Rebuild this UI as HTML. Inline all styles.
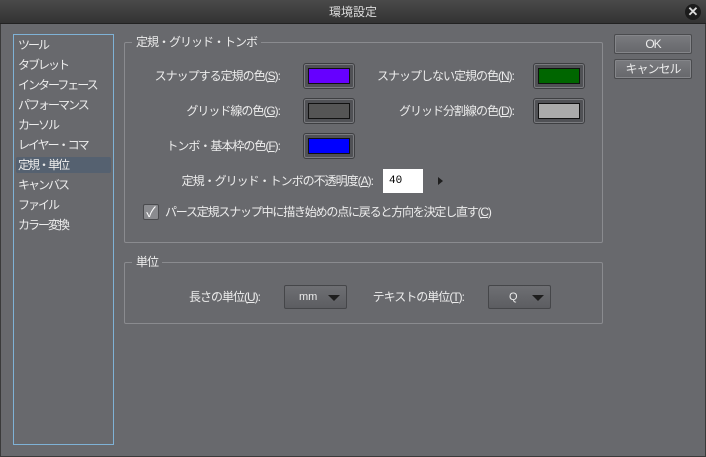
<!DOCTYPE html>
<html><head><meta charset="utf-8"><style>
*{box-sizing:border-box;margin:0;padding:0}
body{width:706px;height:457px;background:#68696d;font-family:"Liberation Sans","Noto Sans CJK JP",sans-serif;font-size:12px;color:#ececec;position:relative;overflow:hidden}
.abs{position:absolute}
#title{left:0;top:0;width:706px;height:24px;background:linear-gradient(#4a4a4a,#333);border-bottom:1px solid #222;text-align:center;line-height:24px;color:#ddd;font-size:12px}
#win{left:0;top:24px;width:706px;height:433px;border:1px solid #3a3a3a;border-top:none}
#side{left:13px;top:34px;width:101px;height:411px;border:1px solid #7fb2d6;background:#68696d}
.it{position:absolute;left:4px;height:16px;line-height:16px;white-space:nowrap;letter-spacing:-2px}
.sel{left:2px;width:95px;background:#556170;border-radius:2px;padding-left:2px}
.grp{border:1px solid #8a8b8f;border-radius:2px}
.gt{background:#68696d;padding:0 4px;line-height:14px;letter-spacing:-1px}
.lab{text-align:right;line-height:14px;white-space:nowrap;letter-spacing:-1px}
.sw{width:52px;height:26px;background:#505155;border:1px solid #3e3f42;border-radius:3px;padding:4px;box-shadow:inset 0 0 0 1px #7a7b7f}
.sw div{width:100%;height:100%;border:1px solid #111}
.btn{width:78px;height:20px;border:1px solid #4a4b4e;border-radius:2px;background:linear-gradient(#7a7b7f,#66676b);text-align:center;line-height:18px;box-shadow:inset 0 0 0 1px #85868a;letter-spacing:-1px}
.dd{width:63px;height:24px;border:1px solid #454649;border-radius:2px;background:linear-gradient(#6e6f73,#5c5d61);line-height:22px;font-size:11px}
.tri{position:absolute;right:6px;top:9px;width:0;height:0;border-left:6px solid transparent;border-right:6px solid transparent;border-top:6px solid #1e1e1e}
u{text-decoration:underline}
</style></head><body>
<div id="title" class="abs">環境設定</div>
<div class="abs" style="left:685px;top:4px;width:16px;height:16px;border-radius:50%;background:#1c1c1c;color:#ddd;font-size:13px;line-height:16px;text-align:center;font-weight:bold">✕</div>
<div id="win" class="abs"></div>
<div id="side" class="abs">
<div class="it" style="top:2px">ツール</div>
<div class="it" style="top:22px">タブレット</div>
<div class="it" style="top:42px">インターフェース</div>
<div class="it" style="top:62px">パフォーマンス</div>
<div class="it" style="top:82px">カーソル</div>
<div class="it" style="top:102px">レイヤー・コマ</div>
<div class="it sel" style="top:122px">定規・単位</div>
<div class="it" style="top:142px">キャンバス</div>
<div class="it" style="top:162px">ファイル</div>
<div class="it" style="top:182px">カラー変換</div>
</div>
<div class="abs grp" style="left:124px;top:42px;width:479px;height:201px"></div>
<div class="abs gt" style="left:132px;top:35px">定規・グリッド・トンボ</div>
<div class="abs grp" style="left:124px;top:262px;width:479px;height:62px"></div>
<div class="abs gt" style="left:132px;top:255px">単位</div>

<div class="abs lab" style="right:426px;top:69px">スナップする定規の色(<u>S</u>):</div>
<div class="abs sw" style="left:303px;top:63px"><div style="background:#6600ff"></div></div>
<div class="abs lab" style="right:192px;top:69px">スナップしない定規の色(<u>N</u>):</div>
<div class="abs sw" style="left:533px;top:63px"><div style="background:#006600"></div></div>
<div class="abs lab" style="right:426px;top:104px">グリッド線の色(<u>G</u>):</div>
<div class="abs sw" style="left:303px;top:98px"><div style="background:#555"></div></div>
<div class="abs lab" style="right:192px;top:104px">グリッド分割線の色(<u>D</u>):</div>
<div class="abs sw" style="left:533px;top:98px"><div style="background:#aaa"></div></div>
<div class="abs lab" style="right:426px;top:139px">トンボ・基本枠の色(<u>F</u>):</div>
<div class="abs sw" style="left:303px;top:133px"><div style="background:#0000ff"></div></div>
<div class="abs lab" style="right:333px;top:174px">定規・グリッド・トンボの不透明度(<u>A</u>):</div>
<div class="abs" style="left:383px;top:169px;width:40px;height:24px;background:#fff;color:#000;font-size:11px;line-height:24px;padding-left:6px;font-family:'Liberation Mono',monospace">40</div>
<div class="abs" style="left:438px;top:177px;width:0;height:0;border-top:4px solid transparent;border-bottom:4px solid transparent;border-left:5px solid #1e1e1e"></div>
<div class="abs" style="left:143px;top:204px;width:16px;height:16px;background:#8a8b8f;border:1px solid #4a4b4e;border-radius:2px;color:#fff;font-size:14px;line-height:14px;text-align:center">✓</div>
<div class="abs lab" style="left:165px;top:205px;text-align:left;letter-spacing:-1.2px">パース定規スナップ中に描き始めの点に戻ると方向を決定し直す(<u>C</u>)</div>

<div class="abs lab" style="right:446px;top:290px">長さの単位(<u>U</u>):</div>
<div class="abs dd" style="left:284px;top:285px"><span style="margin-left:14px">mm</span><div class="tri"></div></div>
<div class="abs lab" style="right:242px;top:290px">テキストの単位(<u>T</u>):</div>
<div class="abs dd" style="left:488px;top:285px"><span style="margin-left:20px">Q</span><div class="tri"></div></div>

<div class="abs btn" style="left:614px;top:34px">OK</div>
<div class="abs btn" style="left:614px;top:59px">キャンセル</div>
</body></html>
